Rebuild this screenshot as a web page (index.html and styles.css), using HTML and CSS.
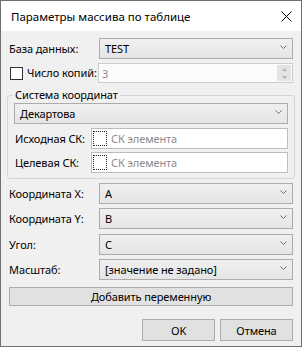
FILE: index.html
```html
<!DOCTYPE html>
<html lang="ru">
    <head>
        <meta charset="UTF-8" />
        <title>Параметры массива по таблице</title>
        <link rel="stylesheet" href="styles.css">
    </head>
    <body>
        <div class="window">
            <div class="titlebar">
                <span class="title">Параметры массива по таблице</span>
                <svg class="close" width="11" height="11" viewBox="0 0 11 11">
                    <path d="M0.5 0.5 L10.5 10.5 M10.5 0.5 L0.5 10.5" stroke="#000" stroke-width="1" fill="none" />
                </svg>
            </div>

            <div class="content">
                <div class="row">
                    <label class="lbl">База данных:</label>
                    <div class="combo">
                        <span class="combo-text">TEST</span>
                        <svg class="chevron" width="7" height="4" viewBox="0 0 7 4"><path d="M0.5 0.5 L3.5 3.5 L6.5 0.5" stroke="#6d6d6d" fill="none" /></svg>
                    </div>
                </div>

                <div class="row row-copies">
                    <label class="lbl lbl-check"><span class="checkbox"></span>Число копий:</label>
                    <div class="spin">
                        <span class="spin-text">3</span>
                        <div class="spin-btns">
                            <span class="spin-btn"><svg width="5" height="3" viewBox="0 0 5 3"><path d="M0 3 L2.5 0 L5 3 Z" fill="#b4b4b4" /></svg></span>
                            <span class="spin-btn"><svg width="5" height="3" viewBox="0 0 5 3"><path d="M0 0 L2.5 3 L5 0 Z" fill="#b4b4b4" /></svg></span>
                        </div>
                    </div>
                </div>

                <fieldset class="group">
                    <legend>Система координат</legend>
                    <div class="combo">
                        <span class="combo-text">Декартова</span>
                        <svg class="chevron" width="7" height="4" viewBox="0 0 7 4"><path d="M0.5 0.5 L3.5 3.5 L6.5 0.5" stroke="#6d6d6d" fill="none" /></svg>
                    </div>
                    <div class="row row-cs">
                        <label class="lbl lbl-cs">Исходная СК:</label>
                        <div class="cs-input">
                            <span class="cs-icon"></span>
                            <span class="placeholder">СК элемента</span>
                        </div>
                    </div>
                    <div class="row row-cs row-cs2">
                        <label class="lbl lbl-cs">Целевая СК:</label>
                        <div class="cs-input">
                            <span class="cs-icon"></span>
                            <span class="placeholder">СК элемента</span>
                        </div>
                    </div>
                </fieldset>

                <div class="row row-var">
                    <label class="lbl">Координата X:</label>
                    <div class="combo">
                        <span class="combo-text">A</span>
                        <svg class="chevron" width="7" height="4" viewBox="0 0 7 4"><path d="M0.5 0.5 L3.5 3.5 L6.5 0.5" stroke="#6d6d6d" fill="none" /></svg>
                    </div>
                </div>
                <div class="row row-var">
                    <label class="lbl">Координата Y:</label>
                    <div class="combo">
                        <span class="combo-text">B</span>
                        <svg class="chevron" width="7" height="4" viewBox="0 0 7 4"><path d="M0.5 0.5 L3.5 3.5 L6.5 0.5" stroke="#6d6d6d" fill="none" /></svg>
                    </div>
                </div>
                <div class="row row-var row-angle">
                    <label class="lbl">Угол:</label>
                    <div class="combo">
                        <span class="combo-text">C</span>
                        <svg class="chevron" width="7" height="4" viewBox="0 0 7 4"><path d="M0.5 0.5 L3.5 3.5 L6.5 0.5" stroke="#6d6d6d" fill="none" /></svg>
                    </div>
                </div>
                <div class="row row-var">
                    <label class="lbl">Масштаб:</label>
                    <div class="combo">
                        <span class="combo-text">[значение не задано]</span>
                        <svg class="chevron" width="7" height="4" viewBox="0 0 7 4"><path d="M0.5 0.5 L3.5 3.5 L6.5 0.5" stroke="#6d6d6d" fill="none" /></svg>
                    </div>
                </div>

                <button class="btn btn-add">Добавить переменную</button>

                <div class="actions">
                    <button class="btn btn-dlg">OK</button>
                    <button class="btn btn-dlg">Отмена</button>
                </div>
            </div>
        </div>
    </body>
</html>
```

FILE: styles.css
```css
body {
    margin: 0;
    font-family: "Noto Sans", "Open Sans", sans-serif;
    font-size: 11px;
    letter-spacing: -0.1px;
    color: #000;
    background: #fff;
}

.window {
    width: 302px;
    height: 347px;
    box-sizing: border-box;
    border: 1px solid #6f6f6f;
    background: #f0f0f0;
    display: flex;
    flex-direction: column;
}

.titlebar {
    height: 30px;
    background: #fff;
    display: flex;
    align-items: center;
    justify-content: space-between;
    padding: 0 9px 0 10px;
}

.title {
    font-size: 11.5px;
    letter-spacing: 0;
}

.close {
    display: block;
}

.content {
    padding: 7px 8px 0 8px;
    display: flex;
    flex-direction: column;
}

.row {
    display: flex;
    align-items: center;
    height: 21px;
}

.lbl {
    width: 90px;
    flex: none;
    white-space: nowrap;
    line-height: 16px;
}

.combo {
    flex: 1;
    height: 21px;
    box-sizing: border-box;
    border: 1px solid #acacac;
    background: linear-gradient(#f0f0f0, #e5e5e5);
    display: flex;
    align-items: center;
    justify-content: space-between;
    padding: 0 5px 0 5px;
}

.combo-text {
    line-height: 16px;
    white-space: nowrap;
}

.chevron {
    display: block;
    margin-top: -4px;
}

/* checkbox + spin */
.row-copies {
    margin-top: 4px;
    height: 20px;
}

.lbl-check {
    width: 89px;
    display: flex;
    align-items: center;
}

.checkbox {
    flex: none;
    width: 13px;
    height: 13px;
    box-sizing: border-box;
    border: 1px solid #333;
    background: #fff;
    margin: 0 4px 0 1px;
}

.spin {
    flex: 1;
    height: 20px;
    box-sizing: border-box;
    border: 1px solid #cccccc;
    background: #fbfbfb;
    display: flex;
    align-items: center;
    justify-content: space-between;
    padding: 0 1px 0 3px;
}

.spin-text {
    color: #8a8a8a;
}

.spin-btns {
    width: 14px;
    height: 16px;
    display: flex;
    flex-direction: column;
}

.spin-btn {
    flex: 1;
    background: #e3e3e3;
    display: flex;
    align-items: center;
    justify-content: center;
}

.spin-btn svg {
    display: block;
}

/* group */
.group {
    margin: 4px -2px 0 -2px;
    padding: 0 6px 5px 6px;
    border: 1px solid #d5d5d5;
    border-radius: 3px;
    min-width: 0;
}

.group legend {
    padding: 0 2px;
    margin-left: -1px;
    line-height: 16px;
}

.row-cs {
    margin-top: 4px;
}

.row-cs2 {
    margin-top: 3px;
}

.lbl-cs {
    width: 76px;
    padding-left: 1px;
}

.cs-input {
    flex: 1;
    height: 21px;
    box-sizing: border-box;
    border: 1px solid #bdbdbd;
    background: #fff;
    display: flex;
    align-items: center;
    padding-left: 1px;
}

.cs-icon {
    flex: none;
    width: 14px;
    height: 15px;
    box-sizing: border-box;
    border: 1px dotted #222;
    margin-right: 4px;
}

.placeholder {
    color: #8c8c8c;
    line-height: 16px;
}

/* variables */
.row-var {
    margin-top: 4px;
}

.row-angle {
    margin-top: 5px;
}

.btn {
    font-family: inherit;
    font-size: 11px;
    letter-spacing: -0.1px;
    color: #000;
    background: #e1e1e1;
    border: 1px solid #adadad;
    padding: 0;
    box-sizing: border-box;
}

.btn-add {
    margin-top: 7px;
    height: 19px;
    width: 100%;
}

.actions {
    margin-top: 13px;
    display: flex;
    justify-content: flex-end;
    gap: 5px;
}

.btn-dlg {
    width: 73px;
    height: 22px;
}
```
